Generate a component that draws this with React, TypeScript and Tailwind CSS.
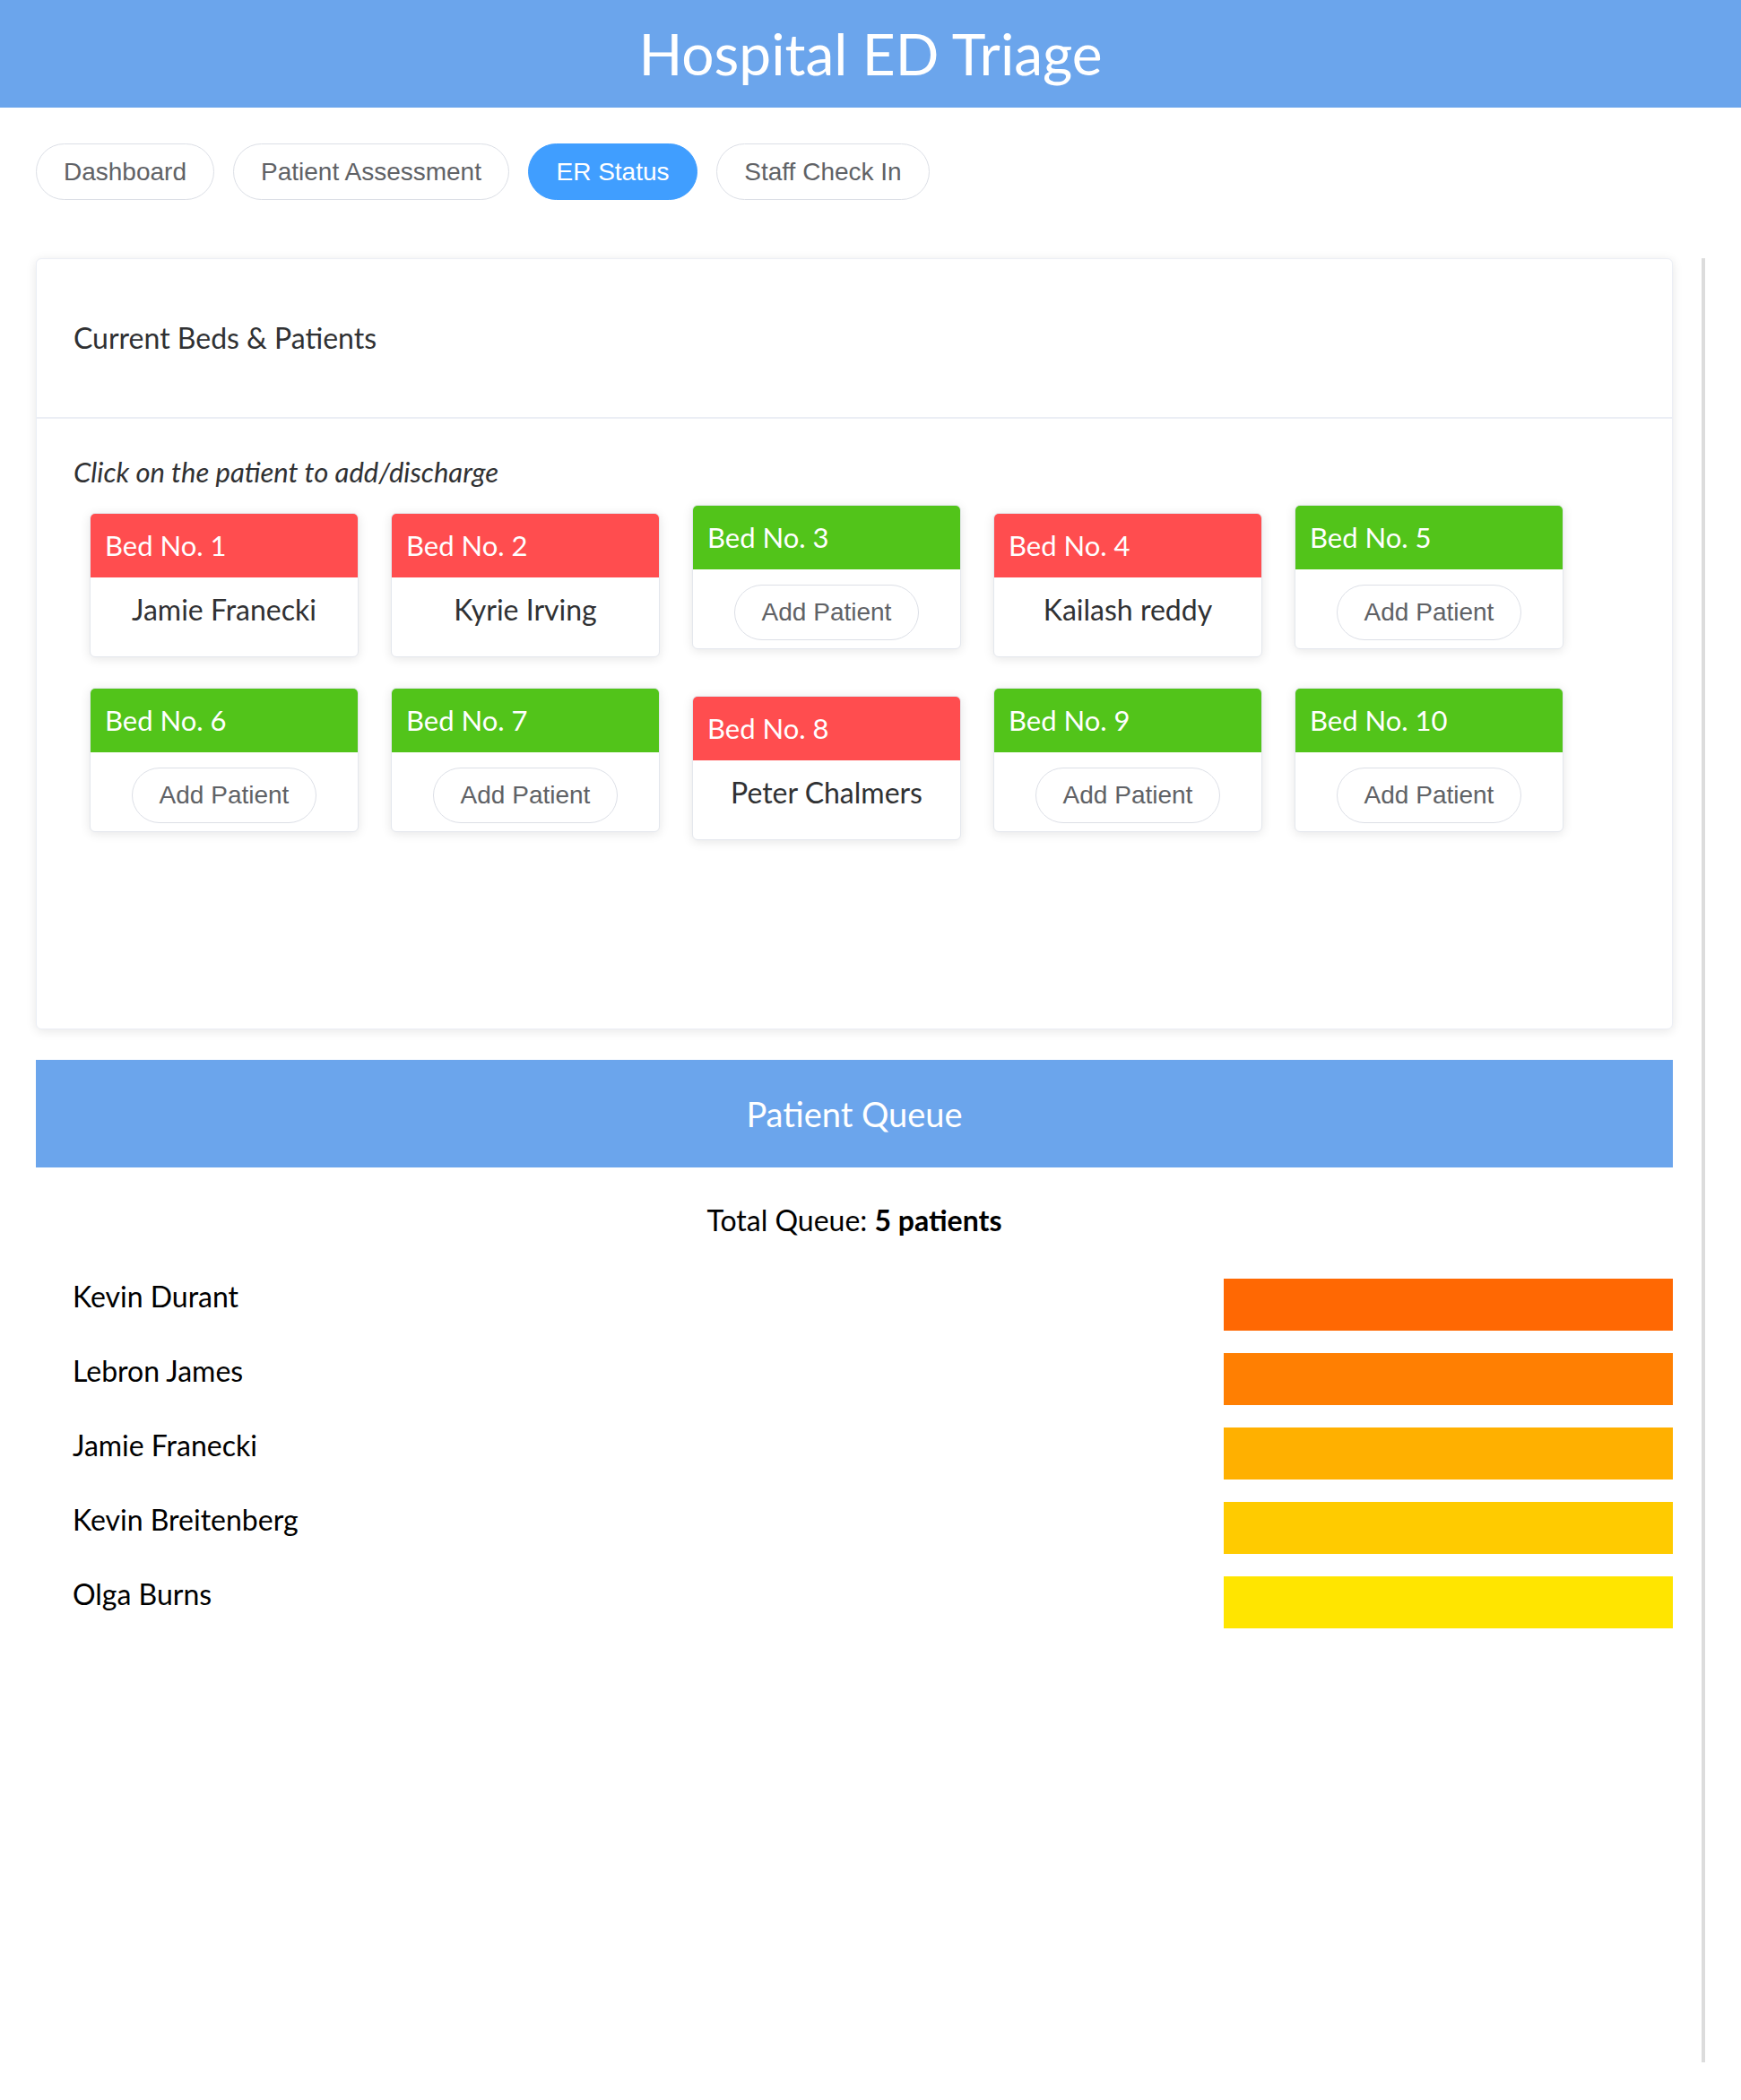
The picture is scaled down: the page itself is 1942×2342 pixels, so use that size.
import React from 'react'

type Bed = { no: number; patient: string | null }

const beds: Bed[] = [
  { no: 1, patient: 'Jamie Franecki' },
  { no: 2, patient: 'Kyrie Irving' },
  { no: 3, patient: null },
  { no: 4, patient: 'Kailash reddy' },
  { no: 5, patient: null },
  { no: 6, patient: null },
  { no: 7, patient: null },
  { no: 8, patient: 'Peter Chalmers' },
  { no: 9, patient: null },
  { no: 10, patient: null },
]

const queue = [
  { name: 'Kevin Durant', color: 'bg-[#ff6803]' },
  { name: 'Lebron James', color: 'bg-[#ff7f02]' },
  { name: 'Jamie Franecki', color: 'bg-[#ffb000]' },
  { name: 'Kevin Breitenberg', color: 'bg-[#ffcb00]' },
  { name: 'Olga Burns', color: 'bg-[#ffe500]' },
]

const tabs = [
  { label: 'Dashboard', width: 'w-[199px]' },
  { label: 'Patient Assessment', width: 'w-[308px]' },
  { label: 'ER Status', width: 'w-[189px]', active: true },
  { label: 'Staff Check In', width: 'w-[238px]' },
]

const lato = "font-['Lato','Liberation_Sans',sans-serif]"
const helv = "font-['Liberation_Sans','Arial',sans-serif]"

// one bed tile: red when taken, green when free
const BedCard = ({ bed }: { bed: Bed }) => {
  const taken = bed.patient !== null
  return (
    <div
      className={`w-[300px] rounded-[6px] border border-[#e4e7ed] bg-white overflow-hidden shadow-[0_2px_12px_rgba(0,0,0,0.1)] ${
        taken ? 'mt-[9px]' : ''
      }`}
    >
      <div
        className={`h-[71px] flex items-center pl-4 text-white text-[31px] ${
          taken ? 'bg-[#ff4d4f]' : 'bg-[#52c41a]'
        }`}
      >
        Bed No. {bed.no}
      </div>
      {taken ? (
        <div className="h-[88px] pt-[12px] text-center text-[32px] leading-[48px] text-[#303133]">
          {bed.patient}
        </div>
      ) : (
        <div className="h-[88px] pt-[17px] flex justify-center">
          <button
            className={`${helv} w-[206px] h-[62px] rounded-full border border-[#dcdfe6] bg-white text-[28px] text-[#606266]`}
          >
            Add Patient
          </button>
        </div>
      )}
    </div>
  )
}

export default function App() {
  const rows = [beds.slice(0, 5), beds.slice(5, 10)]

  return (
    <div className={`${lato} min-h-[2342px] bg-white`}>
      {/* title bar */}
      <header className="h-[120px] bg-[#6ba5ec] flex items-center justify-center">
        <h1 className="text-white text-[64px] leading-none">Hospital ED Triage</h1>
      </header>

      {/* tabs */}
      <nav className="flex gap-[21px] pl-[40px] pt-[40px]">
        {tabs.map((t) => (
          <button
            key={t.label}
            className={`${helv} ${t.width} h-[63px] rounded-full text-[28px] border ${
              t.active
                ? 'bg-[#409eff] border-[#409eff] text-white'
                : 'bg-white border-[#dcdfe6] text-[#606266]'
            }`}
          >
            {t.label}
          </button>
        ))}
      </nav>

      <div className="flex pt-[65px] pl-[40px]">
        <main className="w-[1826px]">
          {/* beds card */}
          <section className="rounded-[6px] border border-[#ebeef5] bg-white shadow-[0_2px_12px_rgba(0,0,0,0.1)]">
            <div className="h-[178px] flex items-center pl-[41px] border-b-2 border-[#ebeef5] text-[32px] text-[#303133]">
              Current Beds &amp; Patients
            </div>
            <div className="pl-[41px] pt-[35px] pb-[210px]">
              <p className="italic text-[31px] leading-[48px] text-[#303133]">
                Click on the patient to add/discharge
              </p>
              <div className="mt-[13px] ml-[18px] flex flex-col gap-[34px]">
                {rows.map((row, i) => (
                  <div key={i} className="flex items-start gap-[36px]">
                    {row.map((b) => (
                      <BedCard key={b.no} bed={b} />
                    ))}
                  </div>
                ))}
              </div>
            </div>
          </section>

          {/* queue */}
          <div className="mt-[34px] h-[120px] bg-[#6ba5ec] flex items-center justify-center text-white text-[38px]">
            Patient Queue
          </div>
          <p className="mt-[35px] text-center text-[32px] leading-[48px] text-black">
            Total Queue: <span className="font-bold">5 patients</span>
          </p>
          <div className="mt-[41px] flex flex-col gap-[25px]">
            {queue.map((q) => (
              <div key={q.name} className="flex justify-between items-start">
                <span className="pl-[41px] pt-[1px] text-[32px] leading-[38px] text-black">{q.name}</span>
                <div className={`w-[501px] h-[58px] ${q.color}`} />
              </div>
            ))}
          </div>
        </main>

        {/* right rule */}
        <div className="ml-[32px] w-[4px] h-[2012px] bg-[#dcdcdc]" />
      </div>
    </div>
  )
}
